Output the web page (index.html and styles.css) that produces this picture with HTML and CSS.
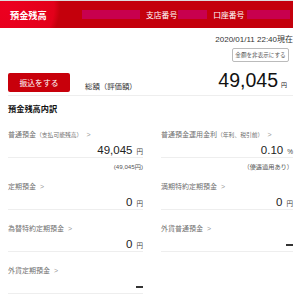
FILE: index.html
```html
<!DOCTYPE html>
<html lang="ja">
<head>
    <meta charset="UTF-8">
    <meta name="viewport" content="width=device-width, initial-scale=1.0">
    <title>預金残高</title>
    <link rel="stylesheet" href="styles.css">
</head>
<body>
    <div class="page">
        <div class="header">
            <span class="header-title">預金残高</span>
            <span class="mask mask-name"></span>
            <span class="header-label">支店番号</span>
            <span class="mask mask-branch"></span>
            <span class="header-label">口座番号</span>
            <span class="mask mask-account"></span>
        </div>

        <div class="content">
            <div class="as-of">2020/01/11 22:40現在</div>
            <div class="hide-row">
                <button class="hide-btn">金額を非表示にする</button>
            </div>

            <div class="total">
                <button class="transfer-btn">振込をする</button>
                <span class="total-label">総額（評価額）</span>
                <span class="total-amount">49,045<span class="unit">円</span></span>
            </div>

            <h2 class="section-title">預金残高内訳</h2>

            <div class="breakdown">
                <div class="item">
                    <div class="item-label">普通預金<small>（支払可能残高）</small><span class="chev">&gt;</span></div>
                    <div class="item-value">49,045<span class="unit">円</span></div>
                    <div class="item-note">(49,045円)</div>
                </div>
                <div class="item">
                    <div class="item-label">普通預金運用金利<small>（年利、税引前）</small><span class="chev">&gt;</span></div>
                    <div class="item-value">0.10<span class="unit">%</span></div>
                    <div class="item-note">（優遇適用あり）</div>
                </div>

                <div class="item">
                    <div class="item-label">定期預金<span class="chev">&gt;</span></div>
                    <div class="item-value">0<span class="unit">円</span></div>
                </div>
                <div class="item">
                    <div class="item-label">満期特約定期預金<span class="chev">&gt;</span></div>
                    <div class="item-value">0<span class="unit">円</span></div>
                </div>

                <div class="item">
                    <div class="item-label">為替特約定期預金<span class="chev">&gt;</span></div>
                    <div class="item-value">0<span class="unit">円</span></div>
                </div>
                <div class="item">
                    <div class="item-label">外貨普通預金<span class="chev">&gt;</span></div>
                    <div class="item-value"><span class="dash"></span></div>
                </div>

                <div class="item">
                    <div class="item-label">外貨定期預金<span class="chev">&gt;</span></div>
                    <div class="item-value"><span class="dash"></span></div>
                </div>
            </div>
        </div>
    </div>
</body>
</html>
```

FILE: styles.css
```css
* {
    margin: 0;
    padding: 0;
    box-sizing: border-box;
}

body {
    background-color: #fff;
    font-family: "Liberation Sans", "Noto Sans CJK JP", sans-serif;
    color: #222;
    overflow: hidden;
}

.page {
    width: 293px;
    border-top: 1px solid #ddd;
}

.header {
    display: flex;
    align-items: center;
    height: 27px;
    padding-left: 10px;
    color: #fff;
    background-color: #c4000c;
    background-image: radial-gradient(circle at 6px 6px, #ec0020 0, #e3001a 48px, #c4000c 54px);
}

.header-title {
    font-size: 9.2px;
    font-weight: bold;
    width: 72px;
}

.header-label {
    font-size: 7.8px;
    margin-left: 6px;
}

.mask {
    height: 9px;
    background-color: #c8004e;
}

.mask-name {
    width: 58px;
}

.mask-branch {
    width: 29px;
    margin-left: 1px;
}

.mask-account {
    width: 43px;
    margin-left: 3px;
}

.content {
    padding-left: 8px;
}

.as-of {
    margin-top: 7px;
    text-align: right;
    font-size: 8px;
    line-height: 10px;
    color: #333;
}

.hide-row {
    display: flex;
    justify-content: flex-end;
    margin-top: 3px;
    padding-right: 4px;
}

.hide-btn {
    height: 14px;
    width: 57px;
    font-family: "Noto Sans CJK JP", sans-serif;
    font-size: 5.6px;
    color: #555;
    background-color: #fff;
    border: 1px solid #bbb;
    border-radius: 2px;
}

.total {
    display: flex;
    align-items: flex-end;
    margin-top: 8px;
    padding-bottom: 3px;
    border-bottom: 1px solid #eee;
}

.transfer-btn {
    width: 62px;
    height: 19px;
    font-family: "Noto Sans CJK JP", sans-serif;
    font-size: 7.8px;
    color: #fff;
    background-color: #c8000b;
    border: none;
    border-radius: 2px;
}

.total-label {
    margin-left: 15px;
    margin-bottom: 1px;
    font-size: 7.4px;
    color: #333;
}

.total-amount {
    margin-left: auto;
    margin-right: 6px;
    margin-bottom: -3px;
    font-size: 19.5px;
    line-height: 20px;
    color: #111;
}

.total-amount .unit {
    font-size: 6px;
    margin-left: 3px;
}

.section-title {
    margin-top: 9px;
    font-size: 8.2px;
    font-weight: bold;
    line-height: 10px;
    color: #111;
}

.breakdown {
    display: grid;
    grid-template-columns: 135px 132px;
    column-gap: 18px;
    row-gap: 14px;
    margin-top: 15px;
}

.item-label {
    font-size: 7px;
    line-height: 10px;
    color: #707070;
    white-space: nowrap;
}

.item-label small {
    font-size: 5.8px;
}

.chev {
    margin-left: 4px;
    color: #999;
}

.item-value {
    display: flex;
    justify-content: flex-end;
    align-items: baseline;
    height: 18px;
    padding-top: 4px;
    font-size: 11.5px;
    line-height: 12px;
    color: #222;
    border-bottom: 1px solid #eee;
}

.item-value .unit {
    font-size: 6.5px;
    margin-left: 4px;
    color: #444;
}

.dash {
    display: block;
    width: 7px;
    height: 1.5px;
    margin-top: 6px;
    background-color: #333;
}

.item-note {
    margin-top: 5px;
    text-align: right;
    font-size: 6.2px;
    line-height: 8px;
    color: #555;
    margin-bottom: -3px;
}
```
